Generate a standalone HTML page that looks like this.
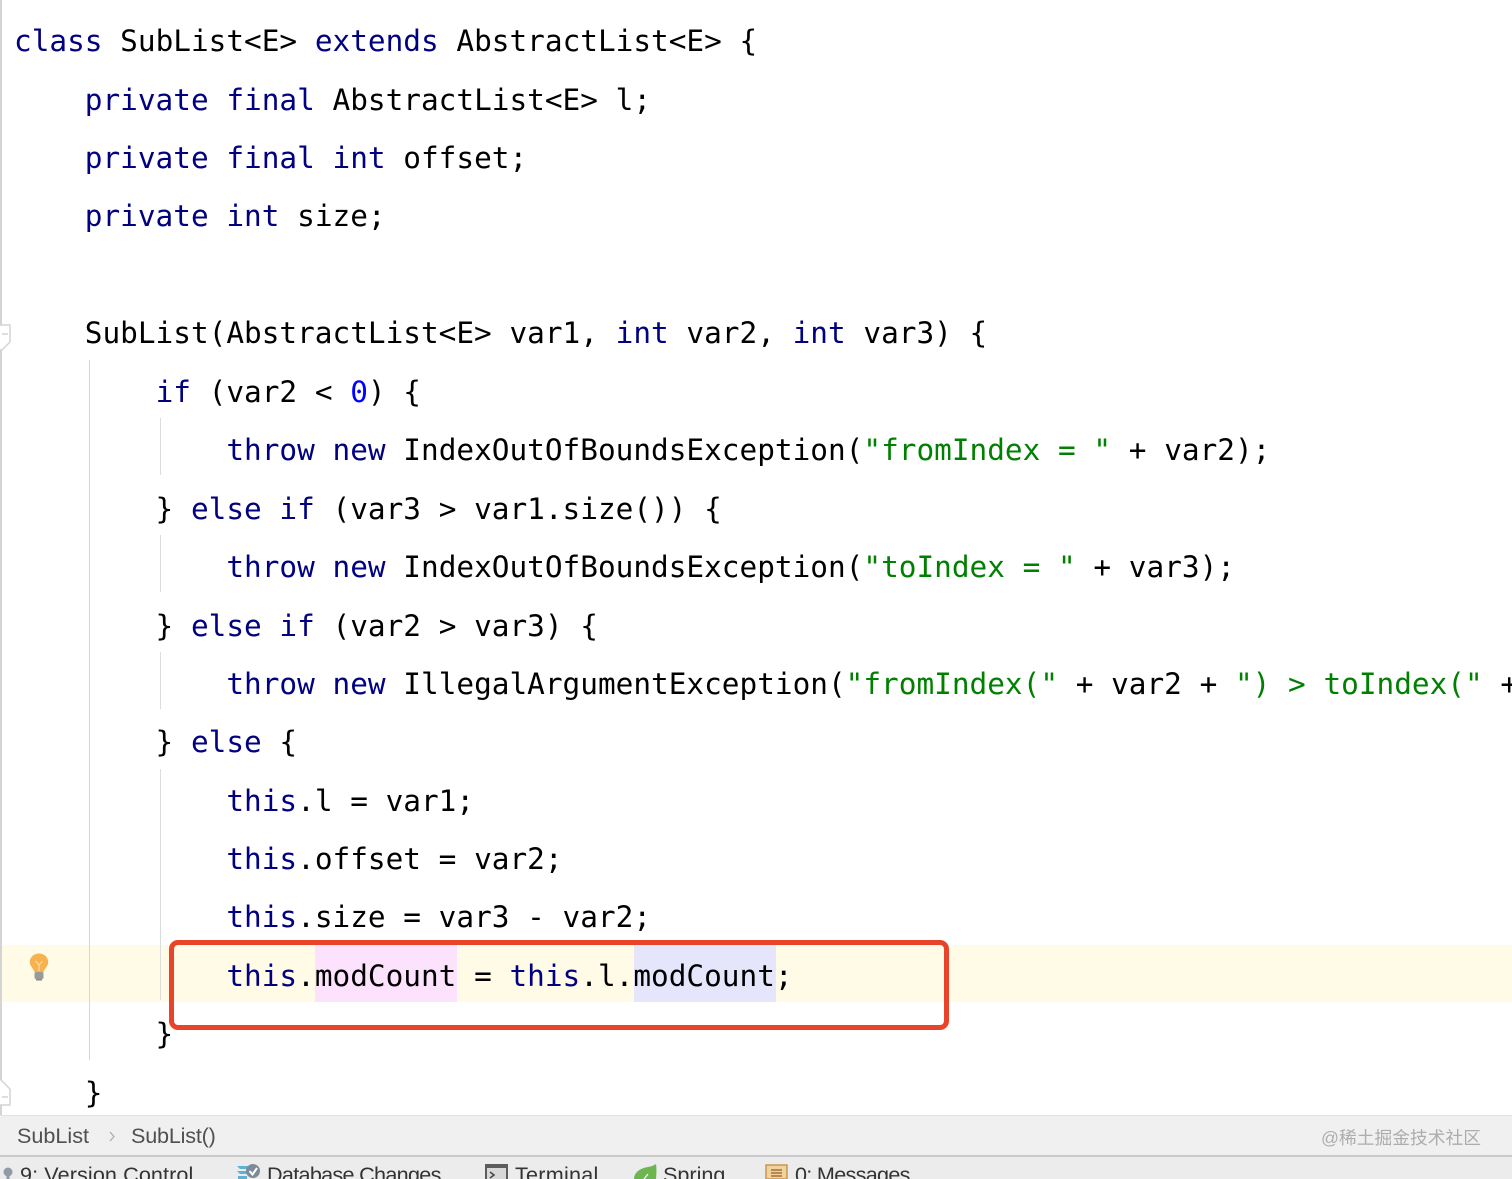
<!DOCTYPE html>
<html>
<head>
<meta charset="utf-8">
<style>
html,body{margin:0;padding:0;background:#fff}
body{width:1512px;height:1179px;position:relative;overflow:hidden}
#w{position:absolute;left:0;top:0;width:1512px;height:1179px;overflow:hidden}
.l{position:absolute;left:14px;white-space:pre;font:29.4px/40px "DejaVu Sans Mono","Liberation Mono",monospace;color:#000;height:40px}
b{font-weight:normal;color:#000080}
i{font-style:normal;color:#008000}
u{text-decoration:none;color:#0000ff}
.a{position:absolute}
.t{position:absolute;font:21.6px/26px "Liberation Sans",sans-serif;color:#333;white-space:pre}
</style>
</head>
<body>
<div id="w">
<div class="a" style="left:2px;top:945px;width:1510px;height:57px;background:#fffbe6"></div>
<div class="a" style="left:315px;top:945px;width:142px;height:57px;background:#fce2fc"></div>
<div class="a" style="left:634px;top:945px;width:142px;height:57px;background:#e5e5fb"></div>

<div class="a" style="left:0;top:0;width:2px;height:1116px;background:#d4d4d4"></div>
<div class="a" style="left:89px;top:360px;width:1px;height:700px;background:#d6d6d6"></div>
<div class="a" style="left:160px;top:418px;width:1px;height:57px;background:#dcdcdc"></div>
<div class="a" style="left:160px;top:535px;width:1px;height:57px;background:#dcdcdc"></div>
<div class="a" style="left:160px;top:652px;width:1px;height:57px;background:#dcdcdc"></div>
<div class="a" style="left:160px;top:769px;width:1px;height:231px;background:#dcdcdc"></div>

<svg class="a" style="left:0;top:320px" width="14" height="32"><path d="M0 5H10V22L2 30H0M2 14H8" fill="#fff" stroke="#d4d4d4" stroke-width="1.5"/></svg>
<svg class="a" style="left:0;top:1076px" width="14" height="34"><path d="M0 3L10 13V29H0M2 21H8" fill="#fff" stroke="#d4d4d4" stroke-width="1.5"/></svg>

<div class="l" style="top:21px"><b>class</b> SubList&lt;E&gt; <b>extends</b> AbstractList&lt;E&gt; {</div>
<div class="l" style="top:80px">    <b>private final</b> AbstractList&lt;E&gt; l;</div>
<div class="l" style="top:138px">    <b>private final int</b> offset;</div>
<div class="l" style="top:196px">    <b>private int</b> size;</div>
<div class="l" style="top:313px">    SubList(AbstractList&lt;E&gt; var1, <b>int</b> var2, <b>int</b> var3) {</div>
<div class="l" style="top:372px">        <b>if</b> (var2 &lt; <u>0</u>) {</div>
<div class="l" style="top:430px">            <b>throw new</b> IndexOutOfBoundsException(<i>"fromIndex = "</i> + var2);</div>
<div class="l" style="top:489px">        } <b>else if</b> (var3 &gt; var1.size()) {</div>
<div class="l" style="top:547px">            <b>throw new</b> IndexOutOfBoundsException(<i>"toIndex = "</i> + var3);</div>
<div class="l" style="top:606px">        } <b>else if</b> (var2 &gt; var3) {</div>
<div class="l" style="top:664px;width:1498px;overflow:hidden">            <b>throw new</b> IllegalArgumentException(<i>"fromIndex("</i> + var2 + <i>") &gt; toIndex("</i> +</div>
<div class="l" style="top:722px">        } <b>else</b> {</div>
<div class="l" style="top:781px">            <b>this</b>.l = var1;</div>
<div class="l" style="top:839px">            <b>this</b>.offset = var2;</div>
<div class="l" style="top:897px">            <b>this</b>.size = var3 - var2;</div>
<div class="l" style="top:956px">            <b>this</b>.modCount = <b>this</b>.l.modCount;</div>
<div class="l" style="top:1014px">        }</div>
<div class="l" style="top:1073px">    }</div>

<div class="a" style="left:169px;top:940px;width:770px;height:80px;border:5px solid #e8442a;border-radius:9px"></div>

<svg class="a" style="left:28px;top:952px" width="22" height="30" viewBox="0 0 22 30">
<path d="M11 1.5C5.5 1.500 1.800 5.500 1.800 10C1.800 14 5 16 6.500 20H15.500C17 16 20.200 14 20.200 10C20.200 5.500 16.500 1.500 11 1.500Z" fill="#f6b24e"/>
<path d="M7.500 9L11 13L14.500 9M11 13V19" fill="none" stroke="#fbdc9a" stroke-width="1.200"/>
<rect x="6.500" y="20" width="9" height="7" rx="1.500" fill="#9a9a9a"/>
<rect x="8" y="27" width="6" height="1.500" fill="#8a8a8a"/>
</svg>

<div class="a" style="left:0;top:1115px;width:1512px;height:40px;background:#f0f0f0;border-top:1px solid #e2e2e2"></div>
<div class="a" style="left:0;top:1155px;width:1512px;height:2px;background:#c9c9c9"></div>
<div class="a" style="left:0;top:1157px;width:1512px;height:22px;background:#ececec"></div>

<div class="t" style="left:17px;top:1123px;color:#505050">SubList</div>
<svg class="a" style="left:107px;top:1130px" width="10" height="13"><path d="M3 2L7 6.500L3 11" fill="none" stroke="#a8a8a8" stroke-width="1.200"/></svg>
<div class="t" style="left:131px;top:1123px;color:#505050;letter-spacing:-.2px">SubList()</div>
<div class="a" style="left:1321px;top:1126px;font:17.75px/24px &quot;Liberation Sans&quot;,&quot;Noto Sans CJK SC&quot;,sans-serif;color:#adadad;white-space:pre">@稀土掘金技术社区</div>

<svg class="a" style="left:2px;top:1166px" width="12" height="13"><circle cx="6" cy="6" r="4.500" fill="#8f9aa6"/><rect x="4.500" y="8" width="3" height="5" fill="#8f9aa6"/></svg>
<div class="t" style="left:20px;top:1162px;letter-spacing:.1px">9: Version Control</div>

<svg class="a" style="left:236px;top:1164px" width="27" height="15">
<path d="M1 2H14V5H4ZM1 7H11V10H4ZM2 12H11V15H2Z" fill="#5fb2d6"/>
<circle cx="17" cy="7" r="7" fill="#7d8a99"/>
<path d="M13.500 7L16.500 10.500L21 4" fill="none" stroke="#fff" stroke-width="2"/>
</svg>
<div class="t" style="left:267px;top:1162px;letter-spacing:-.7px">Database Changes</div>

<svg class="a" style="left:485px;top:1164px" width="23" height="15">
<rect width="23" height="15" fill="#5c5c5c"/>
<rect x="2" y="4" width="19" height="11" fill="#d8d8d8"/>
<path d="M5 8L9 11L5 14" fill="none" stroke="#444" stroke-width="1.500"/>
</svg>
<div class="t" style="left:515px;top:1162px;letter-spacing:.25px">Terminal</div>

<svg class="a" style="left:633px;top:1164px" width="24" height="15">
<path d="M1 15C1 8 8 4 15 3C18 2.500 21 1.500 23 0C24 6 23 15 23 15Z" fill="#6db551"/>
<path d="M11 15L15 10" stroke="#fff" stroke-width="1.200"/>
</svg>
<div class="t" style="left:663px;top:1162px">Spring</div>

<svg class="a" style="left:765px;top:1164px" width="23" height="15">
<rect x="1" y="1" width="21" height="14" fill="#eed39c" stroke="#c9964f" stroke-width="1.500"/>
<path d="M6 6H17M6 9H17M6 12H17" stroke="#a7703a" stroke-width="1.500"/>
</svg>
<div class="t" style="left:795px;top:1162px;letter-spacing:-.7px">0: Messages</div>
</div>
</body>
</html>
